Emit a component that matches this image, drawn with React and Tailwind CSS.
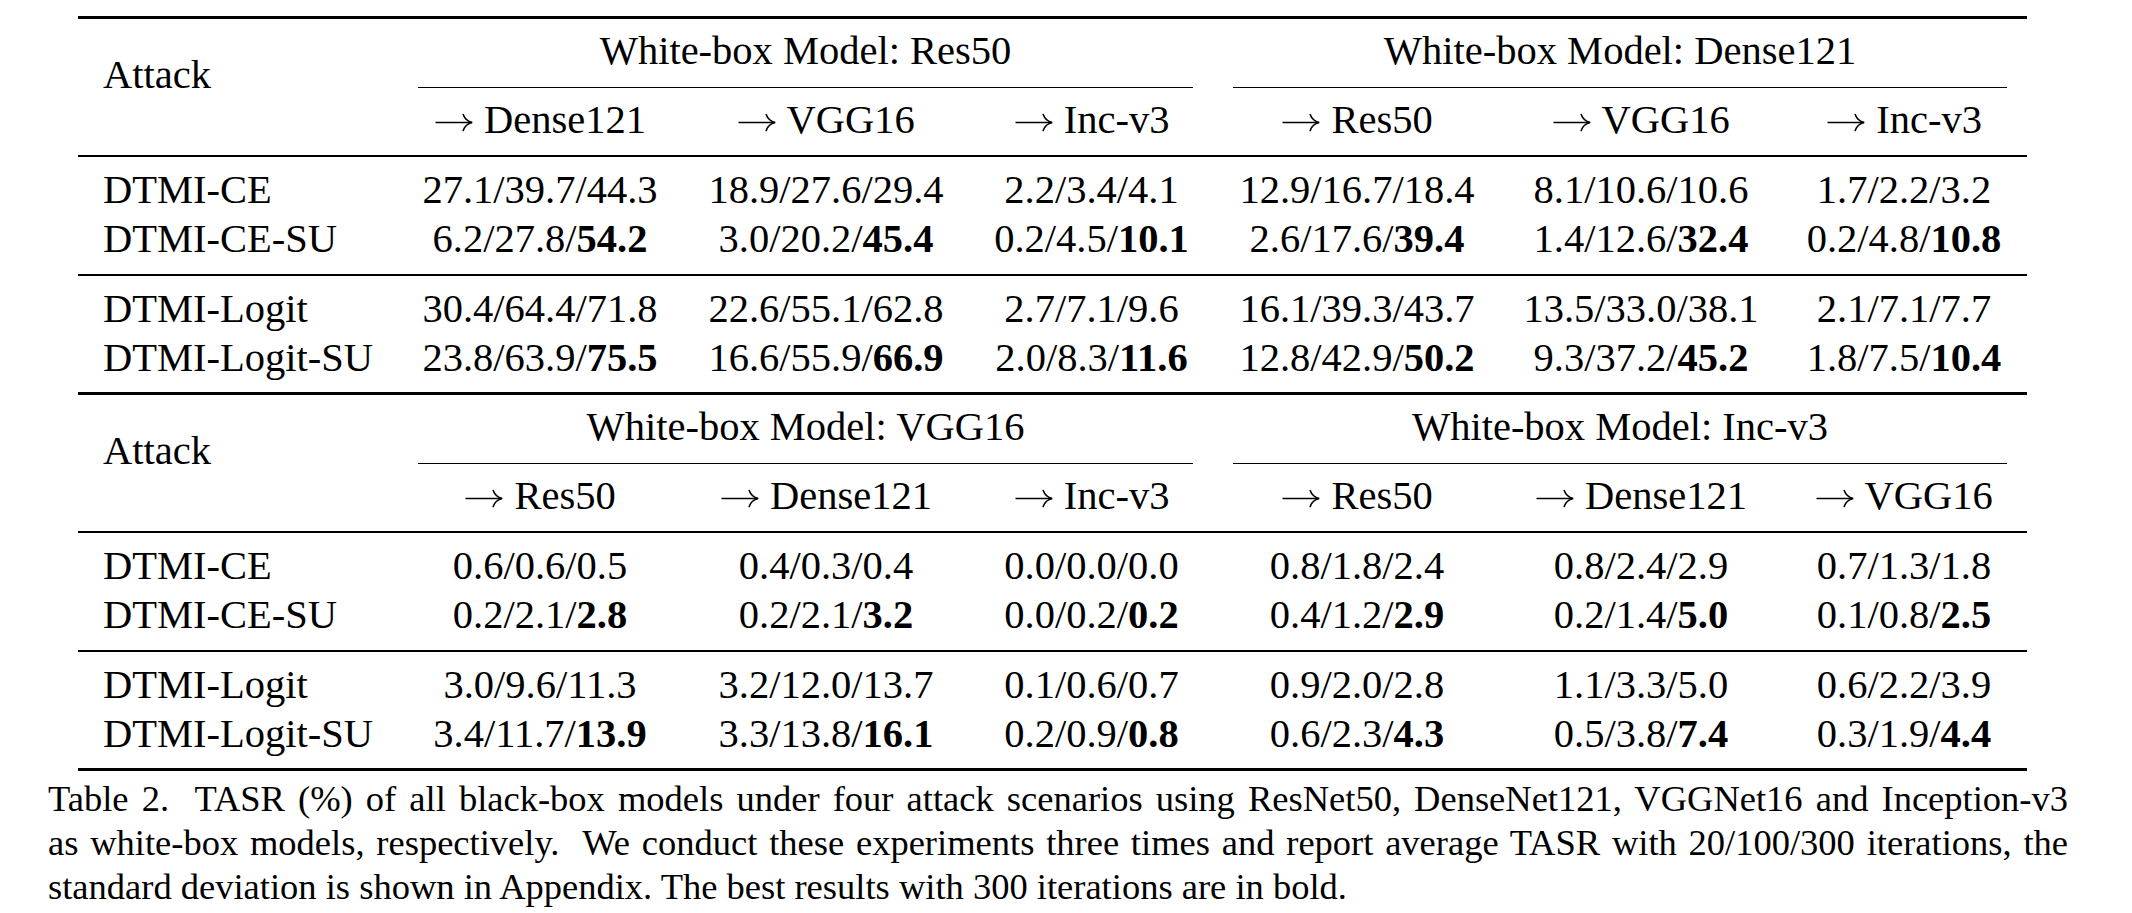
import React from "react";

const tables = [
  {
    groups: [
      { title: "White-box Model: Res50", subs: ["Dense121", "VGG16", "Inc-v3"] },
      { title: "White-box Model: Dense121", subs: ["Res50", "VGG16", "Inc-v3"] },
    ],
    blocks: [
      [
        ["DTMI-CE", ["27.1/39.7/44.3", ""], ["18.9/27.6/29.4", ""], ["2.2/3.4/4.1", ""], ["12.9/16.7/18.4", ""], ["8.1/10.6/10.6", ""], ["1.7/2.2/3.2", ""]],
        ["DTMI-CE-SU", ["6.2/27.8/", "54.2"], ["3.0/20.2/", "45.4"], ["0.2/4.5/", "10.1"], ["2.6/17.6/", "39.4"], ["1.4/12.6/", "32.4"], ["0.2/4.8/", "10.8"]],
      ],
      [
        ["DTMI-Logit", ["30.4/64.4/71.8", ""], ["22.6/55.1/62.8", ""], ["2.7/7.1/9.6", ""], ["16.1/39.3/43.7", ""], ["13.5/33.0/38.1", ""], ["2.1/7.1/7.7", ""]],
        ["DTMI-Logit-SU", ["23.8/63.9/", "75.5"], ["16.6/55.9/", "66.9"], ["2.0/8.3/", "11.6"], ["12.8/42.9/", "50.2"], ["9.3/37.2/", "45.2"], ["1.8/7.5/", "10.4"]],
      ],
    ],
  },
  {
    groups: [
      { title: "White-box Model: VGG16", subs: ["Res50", "Dense121", "Inc-v3"] },
      { title: "White-box Model: Inc-v3", subs: ["Res50", "Dense121", "VGG16"] },
    ],
    blocks: [
      [
        ["DTMI-CE", ["0.6/0.6/0.5", ""], ["0.4/0.3/0.4", ""], ["0.0/0.0/0.0", ""], ["0.8/1.8/2.4", ""], ["0.8/2.4/2.9", ""], ["0.7/1.3/1.8", ""]],
        ["DTMI-CE-SU", ["0.2/2.1/", "2.8"], ["0.2/2.1/", "3.2"], ["0.0/0.2/", "0.2"], ["0.4/1.2/", "2.9"], ["0.2/1.4/", "5.0"], ["0.1/0.8/", "2.5"]],
      ],
      [
        ["DTMI-Logit", ["3.0/9.6/11.3", ""], ["3.2/12.0/13.7", ""], ["0.1/0.6/0.7", ""], ["0.9/2.0/2.8", ""], ["1.1/3.3/5.0", ""], ["0.6/2.2/3.9", ""]],
        ["DTMI-Logit-SU", ["3.4/11.7/", "13.9"], ["3.3/13.8/", "16.1"], ["0.2/0.9/", "0.8"], ["0.6/2.3/", "4.3"], ["0.5/3.8/", "7.4"], ["0.3/1.9/", "4.4"]],
      ],
    ],
  },
];

function Arrow() {
  return (
    <svg
      width="40"
      height="22"
      viewBox="0 0 40 22"
      className="inline-block align-baseline"
      aria-label="→"
    >
      <path d="M1.5 11.5H37.6" stroke="black" strokeWidth="1.6" fill="none" />
      <path
        d="M29.2 3.6C30.6 7.6 33.4 10.4 38.2 11.5C33.4 12.6 30.6 15.4 29.2 19.4"
        stroke="black"
        strokeWidth="1.6"
        fill="none"
        strokeLinecap="round"
      />
    </svg>
  );
}

function Group({ group, cols, width }) {
  return (
    <div className={`${width} flex flex-col`}>
      <div className="mt-[8px] text-center leading-[48px] whitespace-nowrap">{group.title}</div>
      <div className="mt-[12px] mx-[20px] h-px bg-black" />
      <div className={`mt-[8px] grid ${cols} leading-[48px] text-center`}>
        {group.subs.map((s) => (
          <div key={s} className="whitespace-nowrap">
            <Arrow /> {s}
          </div>
        ))}
      </div>
    </div>
  );
}

function Header({ groups }) {
  return (
    <div className="flex">
      <div className="w-[320px] pl-[25px] pt-[32px] leading-[48px]">Attack</div>
      <Group group={groups[0]} cols="grid-cols-[284px_288px_243px]" width="w-[815px]" />
      <Group group={groups[1]} cols="grid-cols-[288px_280px_246px]" width="w-[814px]" />
    </div>
  );
}

function Block({ rows, last }) {
  return (
    <div className={last ? "pt-[8px] pb-[10px]" : "pt-[8px] pb-[11px]"}>
      {rows.map((r) => (
        <div
          key={r[0]}
          className="grid grid-cols-[320px_284px_288px_243px_288px_280px_246px] h-[49px] leading-[49px]"
        >
          <div className="pl-[25px] whitespace-nowrap">{r[0]}</div>
          {r.slice(1).map((c, i) => (
            <div key={i} className="text-center whitespace-nowrap">
              {c[0]}
              {c[1] && <span className="font-bold">{c[1]}</span>}
            </div>
          ))}
        </div>
      ))}
    </div>
  );
}

export default function App() {
  return (
    <div className="w-[2132px] h-[913px] bg-white text-black font-['Liberation_Serif'] overflow-hidden pt-[16px]">
      <div className="ml-[78px] w-[1949px] text-[40.5px]">
        <div className="h-[3px] bg-black" />
        {tables.map((t, ti) => (
          <div key={ti}>
            <div className="pb-[11px]">
              <Header groups={t.groups} />
            </div>
            <div className="h-[2px] bg-black" />
            <Block rows={t.blocks[0]} />
            <div className="h-[2px] bg-black" />
            <Block rows={t.blocks[1]} last />
            <div className="h-[3px] bg-black" />
          </div>
        ))}
      </div>
      <div className="ml-[48px] w-[2020px] mt-[6px] text-[36.5px] leading-[44px]">
        <div className="text-justify [text-align-last:justify] whitespace-pre">Table 2.  TASR (%) of all black-box models under four attack scenarios using ResNet50, DenseNet121, VGGNet16 and Inception-v3</div>
        <div className="text-justify [text-align-last:justify] whitespace-pre">as white-box models, respectively.  We conduct these experiments three times and report average TASR with 20/100/300 iterations, the</div>
        <div>standard deviation is shown in Appendix. The best results with 300 iterations are in bold.</div>
      </div>
    </div>
  );
}
